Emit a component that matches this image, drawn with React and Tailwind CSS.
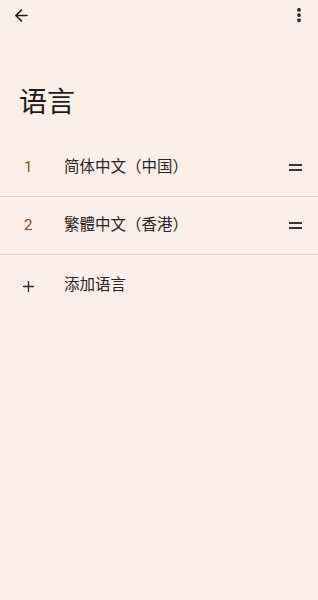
import React from 'react';
import { ArrowLeft, EllipsisVertical, Plus } from 'lucide-react';

const font = { fontFamily: '"Roboto", "Noto Sans CJK SC", sans-serif' };

const langs = [
  { n: 1, name: '简体中文（中国）' },
  { n: 2, name: '繁體中文（香港）' },
];

function DragHandle() {
  return (
    <div className="flex flex-col gap-[3px] w-[13px]">
      <div className="h-[2px] bg-[#3a3330]" />
      <div className="h-[2px] bg-[#3a3330]" />
    </div>
  );
}

export default function App() {
  return (
    <div className="w-[318px] h-[600px] bg-[#fcefe9] text-[#1f1a18] overflow-hidden" style={font}>
      {/* Toolbar */}
      <div className="h-[30px] flex items-center justify-between pl-[12px] pr-[10px]">
        <ArrowLeft className="w-[19px] h-[19px] text-[#1f1a18]" strokeWidth={2} />
        <EllipsisVertical className="w-[18px] h-[18px] text-[#1f1a18]" strokeWidth={3} />
      </div>

      {/* Title */}
      <h1 className="pl-[19px] mt-[56px] text-[28px] leading-[34px] font-normal">语言</h1>

      {/* List */}
      <div className="mt-[19px]">
        {langs.map((l) => (
          <div key={l.n} className="h-[58px] flex items-center border-b border-[#e2d0c9]">
            <span className="w-[64px] pl-[24px] text-[15px] text-[#8b4c20]">{l.n}</span>
            <span className="flex-1 text-[15.5px] text-[#2a2422]">{l.name}</span>
            <div className="pr-[16px]">
              <DragHandle />
            </div>
          </div>
        ))}
        <div className="h-[62px] flex items-center">
          <div className="w-[64px] pl-[20px]">
            <Plus className="w-[17px] h-[17px] text-[#2a2422]" strokeWidth={1.8} />
          </div>
          <span className="text-[15.5px] text-[#2a2422]">添加语言</span>
        </div>
      </div>
    </div>
  );
}
